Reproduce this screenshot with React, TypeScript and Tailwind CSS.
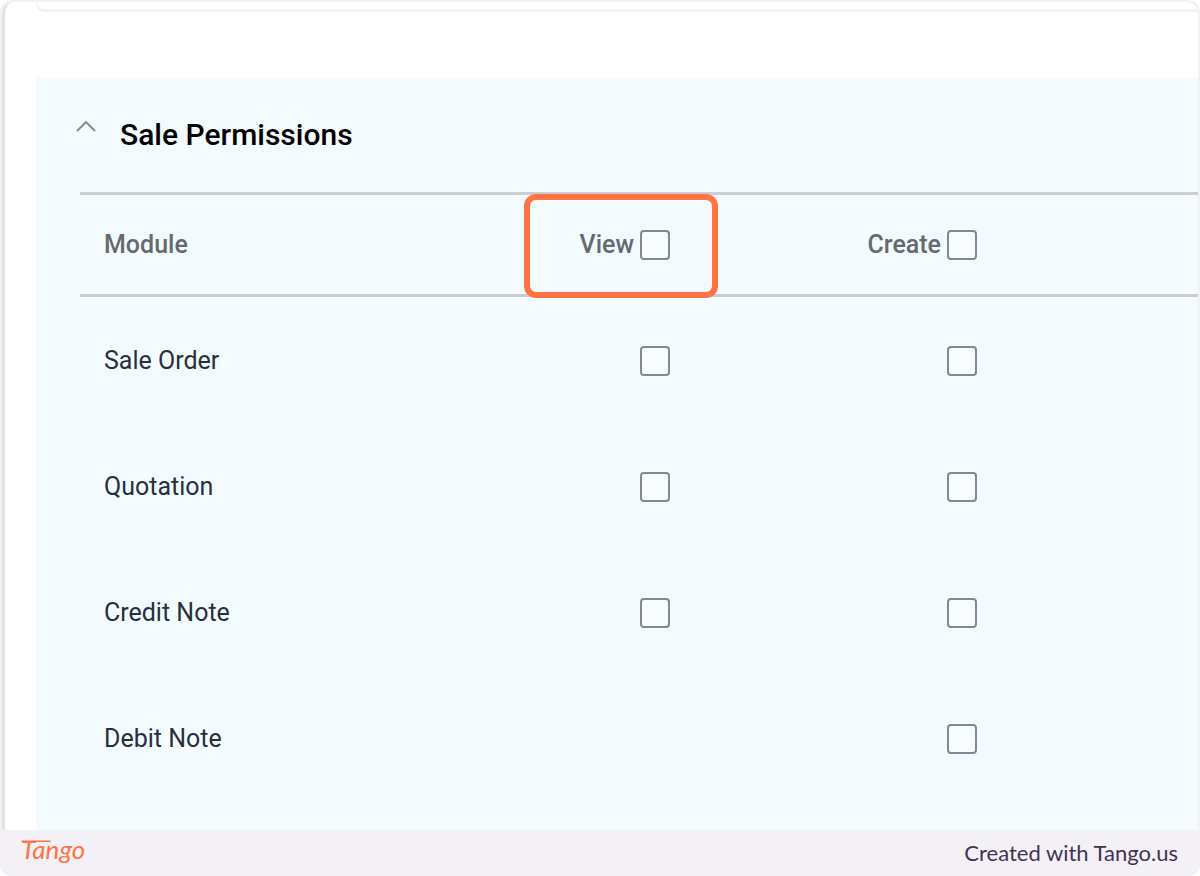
import { useState } from "react"

const rows = [
      { name: "Sale Order", view: true, create: true },
      { name: "Quotation", view: true, create: true },
      { name: "Credit Note", view: true, create: true },
      { name: "Debit Note", view: false, create: true },
]

const checkbox = "block h-[30px] w-[30px] shrink-0 appearance-none rounded-[4px] border-2 border-[#85888c] bg-[#f7fcff] checked:bg-[#5f6368]"

function TangoLogo() {
      return <a href="#" aria-label="Tango" className="block">
            <svg width="76" height="40" viewBox="0 0 76 40" fill="none">
                  <path d="M2 8.2 H30" stroke="#ff7442" strokeWidth="1.6" strokeLinecap="round" />
                  <text x="1" y="26" fill="#ff7442" fontFamily="Lato, sans-serif" fontSize="26" fontStyle="italic" fontWeight="400">Tango</text>
            </svg>
      </a>
}

export default function App() {
      const [open, setOpen] = useState(true)

      return <div className="flex min-h-screen flex-col overflow-hidden rounded-xl bg-[#f3f1f6] font-[Roboto,sans-serif]">
            <main className="mx-[2px] mt-[2px] flex flex-1 flex-col overflow-hidden rounded-t-xl border-l-[3px] border-[#e3e3e5] bg-white pl-[31px]">
                  <div className="h-[10px] rounded-bl-lg border-b-[3px] border-l-2 border-[#f3f3f4]"></div>

                  <section className="mt-[66px] flex-1 bg-[#f3fbff] pl-11">
                        <div className="flex h-[114px] items-center">
                              <button type="button" aria-label="Toggle sale permissions" aria-expanded={open} onClick={() => setOpen(!open)} className="-ml-1 mb-4 h-5 w-5">
                                    <svg width="20" height="20" viewBox="0 0 20 20" fill="none" stroke="#85898c" strokeWidth="1.8">
                                          <path d="M1 14 L10 5 L19 14" />
                                    </svg>
                              </button>
                              <h2 className="ml-6 text-[30px] leading-10 font-medium text-black">Sale Permissions</h2>
                        </div>

                        {open && <table className="w-full table-fixed border-separate border-spacing-0 text-left text-[25px] leading-8">
                              <thead>
                                    <tr className="h-[105px] text-[#666a6e] [&>th]:border-y-[3px] [&>th]:border-[#cbcdd0] [&>th]:py-0 [&>th]:font-medium">
                                          <th className="w-[444px] pl-6">Module</th>
                                          <th className="relative w-[194px] pr-12">
                                                <label className="flex items-center justify-end gap-1.5">
                                                      View
                                                      <input type="checkbox" className={checkbox} />
                                                </label>
                                                <div className="pointer-events-none absolute inset-x-0 -top-px -bottom-1 rounded-xl border-6 border-[#ff7442]"></div>
                                          </th>
                                          <th className="w-[307px] pr-12">
                                                <label className="flex items-center justify-end gap-1.5">
                                                      Create
                                                      <input type="checkbox" className={checkbox} />
                                                </label>
                                          </th>
                                          <th></th>
                                    </tr>
                              </thead>
                              <tbody>
                                    {rows.map((row) => <tr key={row.name} className="h-[126px] text-[#25303f] [&>td]:pt-[2px]">
                                          <td className="pl-6">{row.name}</td>
                                          <td className="pr-12">
                                                {row.view && <input type="checkbox" aria-label={"View " + row.name} className={checkbox + " ml-auto"} />}
                                          </td>
                                          <td className="pr-12">
                                                {row.create && <input type="checkbox" aria-label={"Create " + row.name} className={checkbox + " ml-auto"} />}
                                          </td>
                                          <td></td>
                                    </tr>)}
                              </tbody>
                        </table>}
                  </section>
            </main>

            <footer className="flex h-[46px] items-center justify-between bg-[#f3f1f6] pr-[22px] pl-5">
                  <TangoLogo />
                  <p className="font-[Lato,sans-serif] text-[22px] leading-7 text-[#433353]">Created with Tango.us</p>
            </footer>
      </div>
}
